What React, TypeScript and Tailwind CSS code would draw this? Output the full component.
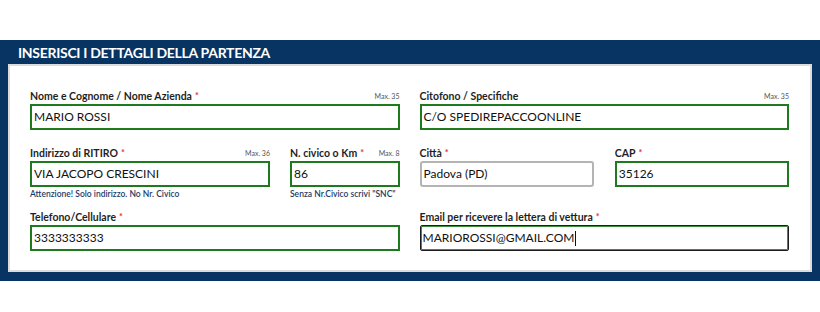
import React from "react";

const font = { fontFamily: "Lato, 'Open Sans', sans-serif" };

type FieldProps = {
  label: string;
  value: string;
  required?: boolean;
  max?: string;
  hint?: string;
  variant?: "ok" | "plain" | "focus";
  className?: string;
};

function Field({ label, value, required, max, hint, variant = "ok", className = "" }: FieldProps) {
  const box =
    variant === "ok"
      ? "border-2 border-[#1d7a1d]"
      : variant === "plain"
        ? "border-2 border-[#b4b4b4] rounded-[3px]"
        : "border border-[#1b1b1b] rounded-[2px] shadow-[inset_0_0_0_1px_#3f8f3f]";

  return (
    <div className={className}>
      <div className="flex h-[15px] items-start justify-between">
        <span className="text-[10.5px] leading-[14px] font-bold text-[#1f1f1f]">
          {label}
          {required && <span className="ml-[3px] text-[9px] align-top text-[#e0303a]">*</span>}
        </span>
        {max && <span className="pt-[3px] text-[7px] leading-[8px] text-[#555]">{max}</span>}
      </div>
      <div className={`flex h-[26px] items-center px-[2px] ${box}`}>
        <span className="text-[12px] leading-none text-[#111]">{value}</span>
        {variant === "focus" && <span className="ml-px h-[15px] w-px bg-[#111]" />}
      </div>
      {hint && (
        <div className="pt-[2px] text-[8.5px] leading-[11px] font-semibold whitespace-nowrap text-[#1f3b66]">
          {hint}
        </div>
      )}
    </div>
  );
}

export default function App() {
  return (
    <div className="h-[312px] w-[820px] bg-white pt-[40px]" style={font}>
      <div className="bg-[#073463] px-2 pb-[9px]">
        <h2 className="flex h-[24px] items-center pl-[10px] text-[14px] font-bold tracking-[-0.3px] text-white">
          INSERISCI I DETTAGLI DELLA PARTENZA
        </h2>
        <div className="h-[208px] border-2 border-[#dcdcdc] bg-white pt-[23px] pr-[21px] pl-[20px]">
          <div className="grid grid-cols-2 gap-x-[20px]">
            <Field label="Nome e Cognome / Nome Azienda" value="MARIO ROSSI" required max="Max. 35" />
            <Field label="Citofono / Specifiche" value="C/O SPEDIREPACCOONLINE" max="Max. 35" />
          </div>

          <div className="mt-[16px] grid grid-cols-2 gap-x-[20px]">
            <div className="flex gap-[20px]">
              <Field
                className="w-[240px]"
                label="Indirizzo di RITIRO"
                value="VIA JACOPO CRESCINI"
                required
                max="Max. 36"
                hint="Attenzione! Solo indirizzo. No Nr. Civico"
              />
              <Field
                className="flex-1"
                label="N. civico o Km"
                value="86"
                required
                max="Max. 8"
                hint='Senza Nr.Civico scrivi "SNC"'
              />
            </div>
            <div className="flex gap-[21px]">
              <Field className="flex-1" label="Città" value="Padova (PD)" required variant="plain" />
              <Field className="flex-1" label="CAP" value="35126" required />
            </div>
          </div>

          <div className="mt-[10px] grid grid-cols-2 gap-x-[20px]">
            <Field label="Telefono/Cellulare" value="3333333333" required />
            <Field
              label="Email per ricevere la lettera di vettura"
              value="MARIOROSSI@GMAIL.COM"
              required
              variant="focus"
            />
          </div>
        </div>
      </div>
    </div>
  );
}
